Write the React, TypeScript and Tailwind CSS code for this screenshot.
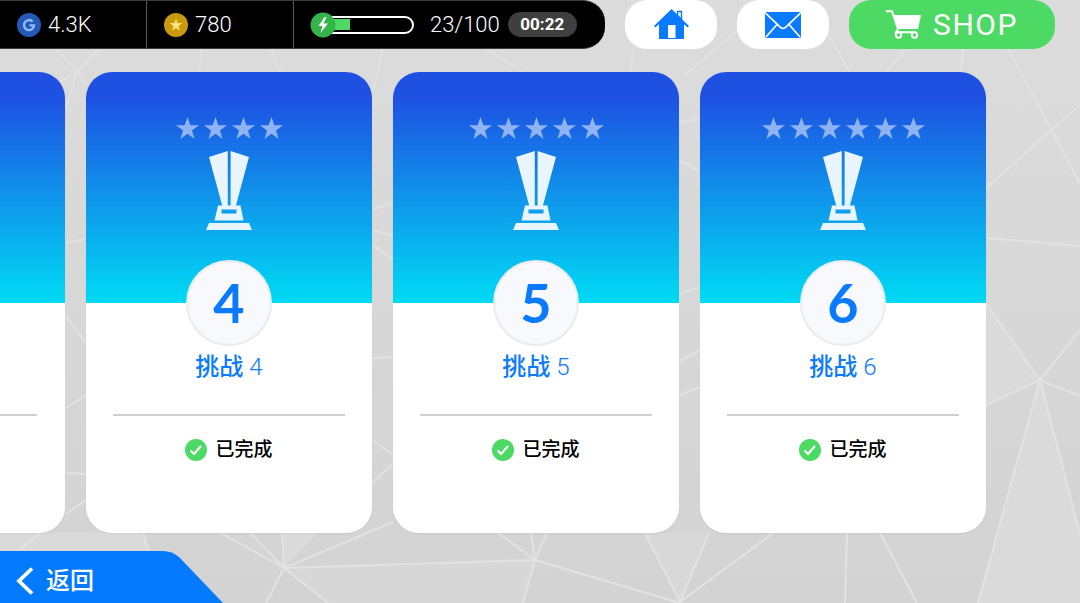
import type { ReactNode } from "react";

const UI_FONT = "font-['Roboto','Noto_Sans_CJK_SC',sans-serif]";

function Backdrop() {
  return (
    <svg
      className="absolute inset-0 h-full w-full"
      viewBox="0 0 1080 603"
      preserveAspectRatio="xMidYMid slice"
      aria-hidden="true"
    >
      <defs>
        <linearGradient id="floor" x1="0" y1="0" x2="0" y2="1">
          <stop offset="0" stopColor="#dcdcdc" />
          <stop offset="1" stopColor="#d3d3d3" />
        </linearGradient>
      </defs>
      <rect width="1080" height="603" fill="url(#floor)" />
      <path d="M1040 380 978 603h102V534z" fill="#dadada" />
      <path d="M986 304 1040 380 986 405z" fill="#dadada" />
      <path d="M284 568 535 560 523 603H328z" fill="#d7d7d7" />
      <path d="M282 533h36l-34 35z" fill="#dadada" />
      <path d="M645 533h64L680 602z" fill="#d8d8d8" />
      <path d="M0 533h143l6 19-149 51z" fill="#dadada" />
      <g stroke="#e2e2e2" strokeWidth="2" fill="none">
        <path d="M56 48 77 72 100 48M77 72 66 108M77 72 86 84M77 72 60 82M202 48 199 72M271 48 280 72M383 48 373 92M485 48 523 72" />
        <path d="M634 48 630 72M738 30 683 76M829 36 850 72M907 48 886 72M963 48 961 72M1008 48 1080 184M1080 105 986 188M986 238 1080 246" />
        <path d="M986 304 1040 380 1080 330M986 405 1040 380 1080 396M1040 380 978 603M1040 380 1080 534" />
        <path d="M66 243 86 239M66 316 86 343M66 408 86 395M66 473 86 474M66 514 86 500" />
        <path d="M373 209 393 203M373 230 393 236M373 245 393 260M373 358 393 357M373 440 393 455M393 464 373 482" />
        <path d="M680 122 700 119M680 161 700 171M680 294 700 287M680 361 700 350M680 395 700 387" />
        <path d="M40 533 16 552M143 533 149 552M221 533 284 568 250 533M282 533 284 568 393 522M284 568 266 603M284 568 328 603M284 568 535 560 680 603" />
        <path d="M498 533 535 560 531 533M547 533 535 560 523 603M645 533 680 602 709 533M680 602 773 533M847 533 845 603M880 533 917 603" />
      </g>
    </svg>
  );
}

function CoinIcon() {
  return (
    <svg viewBox="0 0 24 24" className="size-6 shrink-0" aria-hidden="true">
      <circle cx="12" cy="12" r="12" fill="#2459b6" />
      <path
        d="M15.6 8.6A5 5 0 1 0 17 12.4H12.4"
        fill="none"
        stroke="#8fbdff"
        strokeWidth="2.4"
      />
    </svg>
  );
}

function StarCoinIcon() {
  return (
    <svg viewBox="0 0 24 24" className="size-6 shrink-0" aria-hidden="true">
      <circle cx="12" cy="12" r="12" fill="#c99a0c" />
      <path
        d="m12 5.4 1.6 4.7h4.9l-4 2.9 1.5 4.8-4-2.9-4 2.9L9.5 13l-4-2.9h4.9z"
        fill="#ffe27a"
      />
    </svg>
  );
}

function BoltIcon() {
  return (
    <svg viewBox="0 0 26 26" className="relative z-10 size-[26px]" aria-hidden="true">
      <circle cx="13" cy="13" r="12.5" fill="#34b44a" />
      <path d="M14.5 5 8.5 14h4l-2 7 7.5-9.5h-4.5l3-6.5z" fill="#fff" />
    </svg>
  );
}

function HomeIcon() {
  return (
    <svg viewBox="0 0 35 31" className="h-[31px] w-[35px]" aria-hidden="true">
      <path d="M23.5 2.5h4v8l-4-4z" fill="#fff" stroke="#0a7aff" strokeWidth="1.4" />
      <path
        d="M17.5 0 0 17l1.3 1.5L5 15.3V30h9V16h7.5v14H30V15.3l3.7 3.2L35 17z"
        fill="#0a7aff"
      />
      <path d="M13.5 29.5h9" stroke="#0a7aff" strokeWidth="1" />
    </svg>
  );
}

function MailIcon() {
  return (
    <svg viewBox="0 0 36 26" className="h-[26px] w-9" aria-hidden="true">
      <rect width="36" height="26" rx="1.5" fill="#0a7aff" />
      <path
        d="m.5 1 15 14.3q2.5 2.2 5 0L35.5 1M1 25l11-12.5M35 25 24 12.5"
        fill="none"
        stroke="#fff"
        strokeWidth="1.7"
      />
    </svg>
  );
}

function CartIcon() {
  return (
    <svg viewBox="0 0 35 29" className="h-[29px] w-[35px]" aria-hidden="true">
      <path d="M7.5 5H35l-3 14H12z" fill="#fff" />
      <path
        d="M0 1.2h6L12 19l-2 3.3h20"
        fill="none"
        stroke="#fff"
        strokeWidth="2"
      />
      <circle cx="12.5" cy="25" r="2.7" fill="#4cd964" stroke="#fff" strokeWidth="2" />
      <circle cx="28.5" cy="25" r="2.7" fill="#4cd964" stroke="#fff" strokeWidth="2" />
    </svg>
  );
}

function Star() {
  return (
    <svg viewBox="0 0 23 22" className="h-[22px] w-[23px]" aria-hidden="true">
      <path
        d="m11.5 0 2.9 8.3H23l-7 5.2 2.6 8.5-7.1-5.2L4.4 22 7 13.5 0 8.3h8.6z"
        fill="#8fb3f5"
      />
    </svg>
  );
}

function TrophyIcon() {
  return (
    <svg viewBox="0 0 46 79" className="h-[79px] w-[46px]" fill="#e8f4fe" aria-hidden="true">
      <path d="M3 6 21.8 0v55H16.3zM43 6 24.6 0v55h5.2z" />
      <path
        fillRule="evenodd"
        d="M12 54.5h22.5l3 15H8.5zM15.5 58.5v4h15v-4z"
      />
      <path d="M3 72h40l3 7H0z" />
    </svg>
  );
}

function CheckIcon() {
  return (
    <svg viewBox="0 0 22 22" className="size-[22px]" aria-hidden="true">
      <circle cx="11" cy="11" r="11" fill="#4cd964" />
      <path d="m5.5 11.5 3.5 3.5 7-8" fill="none" stroke="#fff" strokeWidth="2.2" />
    </svg>
  );
}

function Balance({ icon, value }: { icon: ReactNode; value: string }) {
  return (
    <div className="flex w-[147px] items-center gap-[7px] border-r border-[#5a5a5a] pl-[17px]">
      {icon}
      <span>{value}</span>
    </div>
  );
}

function TopBar() {
  return (
    <header className="flex h-[49px] shrink-0 items-stretch gap-5">
      <div className="flex w-[605px] shrink-0 overflow-hidden rounded-r-[22px] border-y border-[#3c3c3c] bg-black text-[22px] font-light text-white">
        <Balance icon={<CoinIcon />} value="4.3K" />
        <Balance icon={<StarCoinIcon />} value="780" />
        <div className="flex items-center pl-4">
          <BoltIcon />
          <div className="-ml-2 flex h-[18px] w-[86px] items-center rounded-r-full border-2 border-white pl-1">
            <span className="h-[11px] w-4 bg-[#4cd964]" />
          </div>
          <span className="ml-4">23/100</span>
          <span className="ml-2 flex h-[25px] w-[69px] items-center justify-center rounded-full bg-[#3f3f3f] text-[17px] font-bold">
            00:22
          </span>
        </div>
      </div>
      <button
        type="button"
        aria-label="Home"
        className="flex w-[92px] shrink-0 items-center justify-center rounded-[22px] bg-white"
      >
        <HomeIcon />
      </button>
      <button
        type="button"
        aria-label="Mail"
        className="flex w-[92px] shrink-0 items-center justify-center rounded-[22px] bg-white"
      >
        <MailIcon />
      </button>
      <button
        type="button"
        className="flex w-[206px] shrink-0 items-center justify-center gap-3 rounded-[22px] bg-[#4cd964] text-[30px] tracking-wider text-white"
      >
        <CartIcon />
        SHOP
      </button>
    </header>
  );
}

function ChallengeCard({ level }: { level: number }) {
  return (
    <article className="flex w-[286px] shrink-0 flex-col items-center overflow-hidden rounded-[26px] bg-white shadow-xs">
      <div className="flex h-[231px] w-full flex-col items-center bg-linear-to-b/srgb from-[#1e50e2] from-10% to-[#00dbf4] pt-[45px]">
        <div className="flex gap-[5px]">
          {Array.from({ length: level }, (_, i) => (
            <Star key={i} />
          ))}
        </div>
        <div className="mt-3">
          <TrophyIcon />
        </div>
      </div>
      <div className="-mt-[43px] flex size-[86px] items-center justify-center rounded-full border-2 border-[#e9ebee] bg-[#f7f9fc] font-['Lato',sans-serif] text-[54px] leading-none font-bold text-[#0a7aff]">
        {level}
      </div>
      <h2 className="mt-[3px] text-[24px] leading-9 font-medium text-[#0a7aff]">
        挑战 <span className="font-light">{level}</span>
      </h2>
      <hr className="mt-[29px] w-[232px] border-t-2 border-[#cfcfcf]" />
      <p className="mt-[18px] flex items-center gap-2 text-[19px] leading-8 font-medium text-black">
        <CheckIcon />
        已完成
      </p>
    </article>
  );
}

function PeekCard() {
  return (
    <div className="w-[65px] shrink-0 overflow-hidden rounded-r-[26px] bg-white shadow-xs">
      <div className="h-[231px] bg-linear-to-b/srgb from-[#1e50e2] from-10% to-[#00dbf4]" />
      <hr className="mt-[111px] mr-7 border-t-2 border-[#cfcfcf]" />
    </div>
  );
}

function BackButton() {
  return (
    <button type="button" className="flex h-[52px] items-stretch text-[24px] font-medium text-white">
      <span className="flex w-40 items-center gap-3 bg-[#047bff] pt-2 pl-4">
        <svg viewBox="0 0 18 28" className="h-7 w-[18px]" aria-hidden="true">
          <path d="M16 1.5 3 14l13 12.5" fill="none" stroke="#fff" strokeWidth="3.8" />
        </svg>
        返回
      </span>
      <svg viewBox="0 0 63 52" className="h-[52px] w-[63px]" aria-hidden="true">
        <path d="M0 0h3q9 0 16 6l44 46H0z" fill="#047bff" />
      </svg>
    </button>
  );
}

export default function App() {
  return (
    <div className={`relative min-h-screen overflow-hidden ${UI_FONT}`}>
      <Backdrop />
      <div className="relative flex min-h-screen flex-col">
        <TopBar />
        <main className="mt-[23px] flex h-[461px] gap-[21px]">
          <PeekCard />
          {[4, 5, 6].map((level) => (
            <ChallengeCard key={level} level={level} />
          ))}
        </main>
        <footer className="mt-auto flex">
          <BackButton />
        </footer>
      </div>
    </div>
  );
}
